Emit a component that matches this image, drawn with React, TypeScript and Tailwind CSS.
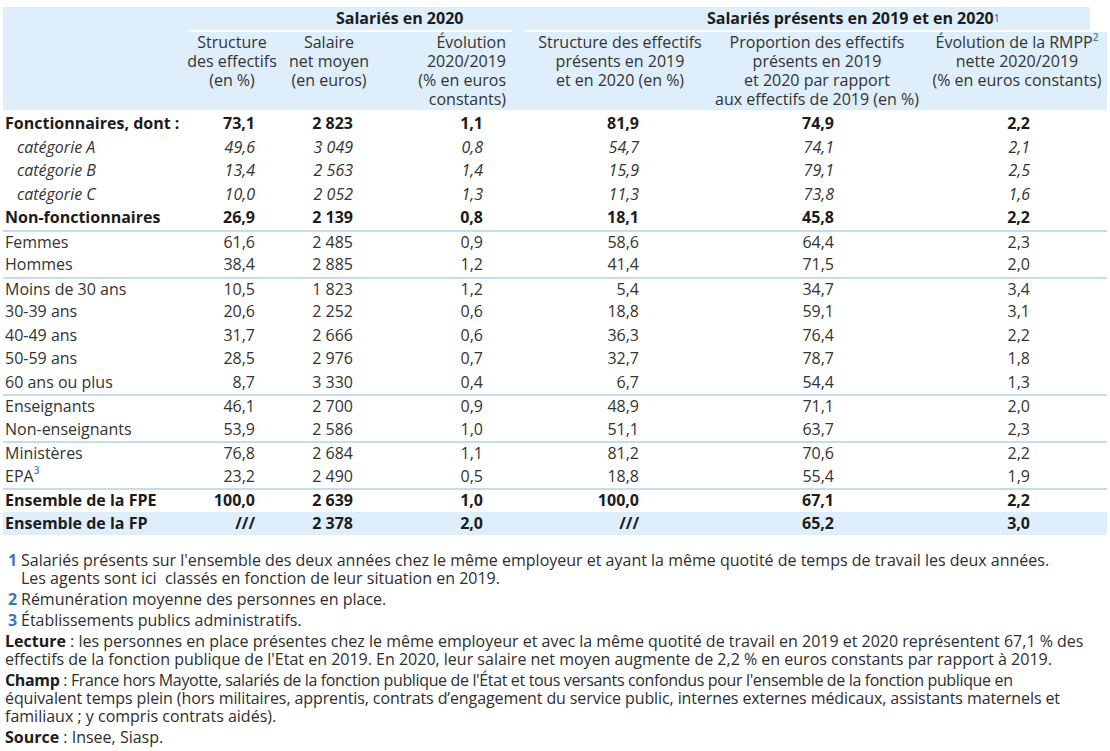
import React from "react";

type Row = {
  label: string;
  sup?: string;
  v: string[];
  kind?: "bold" | "italic";
  sep?: boolean;
  shade?: boolean;
};

const rows: Row[] = [
  { label: "Fonctionnaires, dont :", v: ["73,1", "2 823", "1,1", "81,9", "74,9", "2,2"], kind: "bold" },
  { label: "catégorie A", v: ["49,6", "3 049", "0,8", "54,7", "74,1", "2,1"], kind: "italic" },
  { label: "catégorie B", v: ["13,4", "2 563", "1,4", "15,9", "79,1", "2,5"], kind: "italic" },
  { label: "catégorie C", v: ["10,0", "2 052", "1,3", "11,3", "73,8", "1,6"], kind: "italic" },
  { label: "Non-fonctionnaires", v: ["26,9", "2 139", "0,8", "18,1", "45,8", "2,2"], kind: "bold" },
  { label: "Femmes", v: ["61,6", "2 485", "0,9", "58,6", "64,4", "2,3"], sep: true },
  { label: "Hommes", v: ["38,4", "2 885", "1,2", "41,4", "71,5", "2,0"] },
  { label: "Moins de 30 ans", v: ["10,5", "1 823", "1,2", "5,4", "34,7", "3,4"], sep: true },
  { label: "30-39 ans", v: ["20,6", "2 252", "0,6", "18,8", "59,1", "3,1"] },
  { label: "40-49 ans", v: ["31,7", "2 666", "0,6", "36,3", "76,4", "2,2"] },
  { label: "50-59 ans", v: ["28,5", "2 976", "0,7", "32,7", "78,7", "1,8"] },
  { label: "60 ans ou plus", v: ["8,7", "3 330", "0,4", "6,7", "54,4", "1,3"] },
  { label: "Enseignants", v: ["46,1", "2 700", "0,9", "48,9", "71,1", "2,0"], sep: true },
  { label: "Non-enseignants", v: ["53,9", "2 586", "1,0", "51,1", "63,7", "2,3"] },
  { label: "Ministères", v: ["76,8", "2 684", "1,1", "81,2", "70,6", "2,2"], sep: true },
  { label: "EPA", sup: "3", v: ["23,2", "2 490", "0,5", "18,8", "55,4", "1,9"] },
  { label: "Ensemble de la FPE", v: ["100,0", "2 639", "1,0", "100,0", "67,1", "2,2"], kind: "bold", sep: true },
  { label: "Ensemble de la FP", v: ["///", "2 378", "2,0", "///", "65,2", "3,0"], kind: "bold", shade: true },
];

// right padding of each number column, so the figures sit under their headers
const numPad = ["pr-[19px]", "pr-[31px]", "pr-[29px]", "pr-[73px]", "pr-[88px]", "pr-[77px]"];

const cols = "grid grid-cols-[187px_84px_110px_128px_200px_210px_185px]";

function Sup({ n }: { n: string }) {
  return <sup className="relative -top-[1px] align-super text-[10px] font-semibold text-[#3f7fc1]">{n}</sup>;
}

function TableRow({ row }: { row: Row }) {
  const weight =
    row.kind === "bold" ? "font-bold text-[#1c1c1c]" : row.kind === "italic" ? "italic text-[#333]" : "text-[#333]";
  return (
    <div
      className={`${cols} h-[23.5px] items-center ${weight} ${row.sep ? "border-t-2 border-[#c5dbf0]" : ""} ${
        row.shade ? "bg-[#dfeefb]" : ""
      }`}
    >
      <div className={`whitespace-nowrap ${row.kind === "italic" ? "pl-[14px]" : "pl-[2px]"}`}>
        {row.label}
        {row.sup && <Sup n={row.sup} />}
      </div>
      {row.v.map((val, i) => (
        <div key={i} className={`whitespace-nowrap text-right ${numPad[i]}`}>
          {val}
        </div>
      ))}
    </div>
  );
}

function Note({ n, children }: { n: string; children: React.ReactNode }) {
  return (
    <div className="flex">
      <span className="w-[18px] shrink-0 pl-[5px] font-bold text-[#3a78b8]">{n}</span>
      <span>{children}</span>
    </div>
  );
}

export default function App() {
  return (
    <div
      className="h-[751px] w-[1110px] overflow-hidden bg-white px-[3px] pt-[7px] text-[16px] text-[#2a2a2a]"
      style={{ fontFamily: '"Open Sans", "Liberation Sans", sans-serif' }}
    >
      <div className="bg-[#dfeefb] leading-[19px]">
        <div className="flex h-[25px]">
          <div className="w-[187px]" />
          <div className="flex h-full w-[322px] items-center border-b-2 border-white pl-[146px] font-bold text-[#1c1c1c]">
            Salariés en 2020
          </div>
          <div className="ml-[12px] flex h-full w-[566px] items-center border-b-2 border-white pl-[183px] font-bold text-[#1c1c1c]">
            Salariés présents en 2019 et en 2020
            <Sup n="1" />
          </div>
          <div className="flex-1 bg-white" />
        </div>
        <div className={`${cols} h-[78px] items-start pt-[1px] text-[#333]`}>
          <div />
          <div className="flex flex-col items-center whitespace-nowrap">
            <span>Structure</span>
            <span>des effectifs</span>
            <span>(en %)</span>
          </div>
          <div className="flex flex-col items-center whitespace-nowrap">
            <span>Salaire</span>
            <span>net moyen</span>
            <span>(en euros)</span>
          </div>
          <div className="flex flex-col items-end whitespace-nowrap pr-[6px]">
            <span>Évolution</span>
            <span>2020/2019</span>
            <span>(% en euros</span>
            <span>constants)</span>
          </div>
          <div className="flex flex-col items-center whitespace-nowrap pl-[16px]">
            <span>Structure des effectifs</span>
            <span>présents en 2019</span>
            <span>et en 2020 (en %)</span>
          </div>
          <div className="flex flex-col items-center whitespace-nowrap">
            <span>Proportion des effectifs</span>
            <span>présents en 2019</span>
            <span>et 2020 par rapport</span>
            <span>aux effectifs de 2019 (en %)</span>
          </div>
          <div className="flex flex-col items-center whitespace-nowrap pl-[5px]">
            <span>
              Évolution de la RMPP
              <Sup n="2" />
            </span>
            <span>nette 2020/2019</span>
            <span>(% en euros constants)</span>
          </div>
        </div>
      </div>

      <div className="mt-[2px] leading-[19px]">
        {rows.map((r) => (
          <TableRow key={r.label} row={r} />
        ))}
      </div>

      <div className="mt-[16px] flex flex-col gap-[3px] whitespace-nowrap leading-[18px] text-[#2e2e2e]">
        <Note n="1">
          Salariés présents sur l'ensemble des deux années chez le même employeur et ayant la même quotité de temps de
          travail les deux années.
          <br />
          Les agents sont ici&nbsp; classés en fonction de leur situation en 2019.
        </Note>
        <Note n="2">Rémunération moyenne des personnes en place.</Note>
        <Note n="3">Établissements publics administratifs.</Note>
        <p className="pl-[2px]">
          <b className="text-[#1c1c1c]">Lecture</b> : les personnes en place présentes chez le même employeur et avec la
          même quotité de travail en 2019 et 2020 représentent 67,1 % des
          <br />
          effectifs de la fonction publique de l'Etat en 2019. En 2020, leur salaire net moyen augmente de 2,2 % en euros
          constants par rapport à 2019.
        </p>
        <p className="pl-[2px]">
          <span className="tracking-[-0.35px]">
            <b className="text-[#1c1c1c]">Champ</b> : France hors Mayotte, salariés de la fonction publique de l'État et
            tous versants confondus pour l'ensemble de la fonction publique en
          </span>
          <br />
          <span className="tracking-[-0.1px]">
            équivalent temps plein (hors militaires, apprentis, contrats d’engagement du service public, internes externes
            médicaux, assistants maternels et
          </span>
          <br />
          familiaux ; y compris contrats aidés).
        </p>
        <p className="pl-[2px]">
          <b className="text-[#1c1c1c]">Source</b> : Insee, Siasp.
        </p>
      </div>
    </div>
  );
}
